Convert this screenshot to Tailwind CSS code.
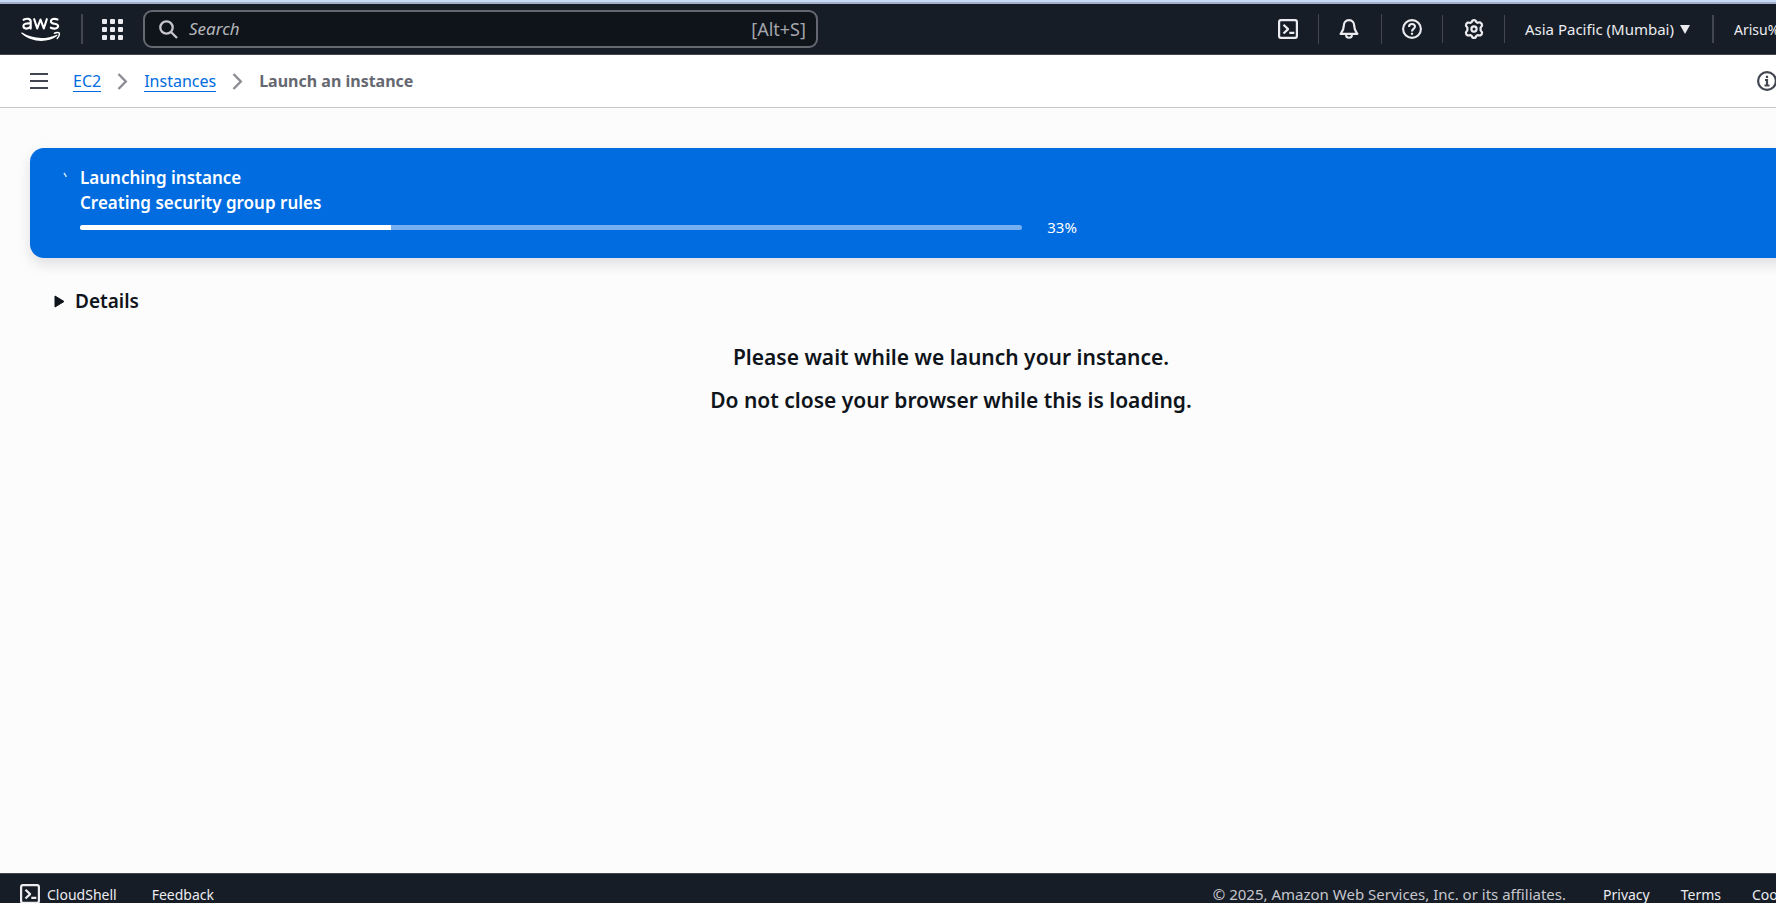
<!DOCTYPE html>
<html lang="en">
<head>
<meta charset="utf-8">
<title>Launch an instance | EC2</title>
<script src="https://cdn.jsdelivr.net/npm/@tailwindcss/browser@4"></script>
</head>
<body class="flex h-screen flex-col overflow-hidden bg-[#fcfcfd] font-['Noto_Sans','Open_Sans',sans-serif] text-[#0f141a]">
<div class="h-[4px] shrink-0 border-b-2 border-[#a3aec9] bg-[#c9dbf7]"></div>

<header class="flex h-[51px] shrink-0 items-center border-b border-[#424650] bg-[#161d26] text-[#ebebf0]">
  <a href="#" aria-label="AWS home" class="ml-[20px] block">
    <svg width="42" height="30" viewBox="0 0 42 30" fill="none" stroke="#fff" stroke-linecap="round" stroke-linejoin="round">
      <path stroke-width="2.1" d="M3.6 5.8C6.7 4.2 10.7 4.3 10.7 7.500V14.600M10.700 9.500C6.300 9.100 3.400 9.600 3.400 12.100c0 3.400 5.300 3.200 7.300.3M14.200 5.200l3 9.300 3.300-9 3.300 9 3-9.300M37.500 5.500c-3-1.200-6.600-.6-6.600 1.900 0 3.200 7.200 1.700 7.200 4.700 0 2.800-4.400 3.100-7.300 1.600"/>
      <path fill="#fff" stroke="none" d="M2.200 18.600C12.500 25.200 26 25.600 36.300 20.900c.9-.3 1.500.5.700 1.100C27.500 29.300 11 28.400 1.500 19.500c-.6-.6 0-1.300.7-.9Z"/>
      <path stroke-width="1.500" d="M34.400 19.200c2.300-1.100 4.900-.9 5 .1.100 1.500-.8 4-2.200 5.200"/>
    </svg>
  </a>
  <div class="ml-[19px] h-[30px] w-[2px] bg-[#424650]"></div>
  <button type="button" aria-label="Services" class="ml-[19px] grid grid-cols-3 gap-[3px]">
    <span class="size-[5px] rounded-[1px] bg-[#ebebf0]"></span><span class="size-[5px] rounded-[1px] bg-[#ebebf0]"></span><span class="size-[5px] rounded-[1px] bg-[#ebebf0]"></span>
    <span class="size-[5px] rounded-[1px] bg-[#ebebf0]"></span><span class="size-[5px] rounded-[1px] bg-[#ebebf0]"></span><span class="size-[5px] rounded-[1px] bg-[#ebebf0]"></span>
    <span class="size-[5px] rounded-[1px] bg-[#ebebf0]"></span><span class="size-[5px] rounded-[1px] bg-[#ebebf0]"></span><span class="size-[5px] rounded-[1px] bg-[#ebebf0]"></span>
  </button>
  <div class="ml-[20px] flex h-[38px] w-[38%] items-center rounded-[9px] border-2 border-[#656871] bg-[#0f141a] pr-[10px] pl-[14px]">
    <svg width="19" height="19" viewBox="0 0 19 19" fill="none" stroke="#c6c6cd" stroke-width="2.300"><circle cx="7.500" cy="7.500" r="6.200"/><path d="M12 12l6 6"/></svg>
    <input type="text" aria-label="Search" placeholder="Search" class="ml-[11px] min-w-0 flex-1 bg-transparent text-[17px] italic outline-none placeholder:text-[#b4b4bb]">
    <span class="text-[18px] text-[#a4a4ad]">[Alt+S]</span>
  </div>
  <nav aria-label="Account" class="ml-auto flex items-center">
    <button type="button" aria-label="CloudShell">
      <svg width="20" height="20" viewBox="0 0 20 20" fill="none" stroke="#ebebf0" stroke-width="2.200" stroke-linejoin="round"><rect x="1.100" y="1.100" width="17.800" height="17.800" rx="1.800"/><path d="M5.500 5.700l4.600 4.400-4.600 4.400M11.300 13.800h5"/></svg>
    </button>
    <div class="ml-[20px] h-[30px] w-px bg-[#424650]"></div>
    <button type="button" aria-label="Notifications" class="ml-[20px]">
      <svg width="20" height="20" viewBox="0 0 20 20" fill="none" stroke="#ebebf0" stroke-width="2.200" stroke-linejoin="round"><path d="M10 1.200c-3.500 0-5.200 2.600-5.200 5.600 0 4-1.100 5.200-3.200 8h16.800c-2.100-2.800-3.200-4-3.200-8 0-3-1.700-5.600-5.200-5.600Z"/><path d="M7 16.200c.4 3.400 5.600 3.400 6 0"/></svg>
    </button>
    <div class="ml-[22px] h-[30px] w-px bg-[#424650]"></div>
    <button type="button" aria-label="Help" class="ml-[20px]">
      <svg width="20" height="20" viewBox="0 0 20 20" fill="none" stroke="#ebebf0" stroke-width="2.100"><circle cx="10" cy="10" r="8.900"/><path d="M7 8c0-4 6-3.900 6-.4 0 2.300-3 2.300-3 4.800M10 13.700v2"/></svg>
    </button>
    <div class="ml-[20px] h-[28px] w-px bg-[#424650]"></div>
    <button type="button" aria-label="Settings" class="ml-[21px]">
      <svg width="20" height="20" viewBox="0 0 20 20" fill="none" stroke="#ebebf0" stroke-width="2.200" stroke-linejoin="round"><path d="M7.700 3.100Q8.200 1.100 10 1.100t2.300 2l1.200.7q2-.6 2.800-.3c1.200.7 1.900 2 1.800 3.200l-1.500 2v2.600l1.500 2c.1 1.200-.6 2.500-1.800 3.200l-2.800-.3-1.200.7Q11.800 18.900 10 18.900t-2.300-2l-1.200-.7-2.800.3c-1.200-.7-1.900-2-1.800-3.200l1.500-2V8.700l-1.500-2c-.1-1.200.6-2.500 1.800-3.200l2.800.3Z"/><circle cx="10" cy="10" r="2.600"/></svg>
    </button>
    <div class="ml-[20px] h-[28px] w-px bg-[#424650]"></div>
    <button type="button" class="ml-[20px] flex items-center gap-[6px] text-[15px] whitespace-nowrap">
      Asia Pacific (Mumbai)
      <svg width="10" height="9" viewBox="0 0 10 9" fill="#ebebf0"><path d="M0 0h10L5 9Z"/></svg>
    </button>
    <div class="ml-[22px] h-[28px] w-[2px] bg-[#424650]"></div>
    <button type="button" class="ml-[20px] w-[42px] overflow-hidden text-left text-[14px] whitespace-nowrap">Arisu%</button>
  </nav>
</header>

<div class="flex h-[53px] shrink-0 items-center overflow-hidden border-b border-[#c6c6cd] bg-white pl-[30px]">
  <button type="button" aria-label="Open navigation" class="flex flex-col gap-[5px]">
    <span class="h-[2px] w-[18px] bg-[#424650]"></span><span class="h-[2px] w-[18px] bg-[#424650]"></span><span class="h-[2px] w-[18px] bg-[#424650]"></span>
  </button>
  <nav aria-label="Breadcrumb" class="ml-[25px] flex items-center gap-[16px] text-[16px] whitespace-nowrap">
    <a href="#" class="border-b border-[#006ce0] leading-[20px] text-[#006ce0]">EC2</a>
    <svg width="11" height="17" viewBox="0 0 11 17" fill="none" stroke="#8c8c94" stroke-width="2.400"><path d="M1.500 1l7.300 7.500L1.500 16"/></svg>
    <a href="#" class="border-b border-[#006ce0] leading-[20px] text-[#006ce0]">Instances</a>
    <svg width="11" height="17" viewBox="0 0 11 17" fill="none" stroke="#8c8c94" stroke-width="2.400"><path d="M1.500 1l7.300 7.500L1.500 16"/></svg>
    <span class="font-bold text-[#656871]">Launch an instance</span>
  </nav>
  <button type="button" aria-label="Info" class="ml-auto w-[19px] overflow-hidden">
    <svg width="20" height="20" viewBox="0 0 20 20" fill="none" stroke="#424650" stroke-width="2.200"><circle cx="10" cy="10" r="8.900"/><path d="M10 4.700v2.200M8 9h2v6M7.500 14.500h5"/></svg>
  </button>
</div>

<main class="min-h-0 flex-1 overflow-hidden pt-[40px] pl-[30px]">
  <section class="-mr-[30px] rounded-[14px] bg-[#006ce0] pt-[17px] pr-[30px] pb-[18px] pl-[50px] text-white shadow-[0_6px_14px_rgba(0,7,22,0.12)]">
    <div class="relative text-[17px] leading-[25px] font-semibold">
      <svg class="absolute top-[7px] -left-[17px]" width="5" height="6" viewBox="0 0 5 6" fill="none" stroke="#fff" stroke-opacity=".8" stroke-width="1.500"><path d="M1 1l2.500 3.800"/></svg>
      <p>Launching instance</p>
      <p>Creating security group rules</p>
    </div>
    <div class="flex h-[25px] items-center">
      <div role="progressbar" aria-label="Launch progress" aria-valuenow="33" aria-valuemin="0" aria-valuemax="100" class="h-[5px] w-5/9 overflow-hidden rounded-[3px] bg-[#75aff0]">
        <div class="h-full bg-white" style="width:33%"></div>
      </div>
      <span class="ml-[25px] text-[15px]">33%</span>
    </div>
  </section>
  <button type="button" aria-expanded="false" class="mt-[30px] ml-[24px] flex items-center gap-[10px] text-[19px] leading-[26px] font-semibold">
    <svg width="11" height="13" viewBox="0 0 11 13" fill="#0f141a" stroke="#0f141a" stroke-linejoin="round"><path d="M1 1v11l9-5.500Z"/></svg>
    Details
  </button>
  <div class="mt-[22px] pl-[96px] text-center text-[21px] leading-[43px] font-semibold">
    <h1>Please wait while we launch your instance.</h1>
    <h2>Do not close your browser while this is loading.</h2>
  </div>
</main>

<footer class="h-[30px] shrink-0 overflow-hidden border-t border-[#424650] bg-[#161d26] text-[14px] text-[#ebebf0]">
  <div class="flex h-[40px] items-center whitespace-nowrap">
    <button type="button" class="ml-[20px] flex items-center gap-[7px]">
      <svg width="20" height="20" viewBox="0 0 20 20" fill="none" stroke="#ebebf0" stroke-width="2.200" stroke-linejoin="round"><rect x="1.100" y="1.100" width="17.800" height="17.800" rx="1.800"/><path d="M5.500 5.700l4.600 4.400-4.600 4.400M11.300 13.800h5"/></svg>
      CloudShell
    </button>
    <a href="#" class="ml-[35px]">Feedback</a>
    <span class="ml-auto text-[15px] text-[#c6c6cd]">© 2025, Amazon Web Services, Inc. or its affiliates.</span>
    <a href="#" class="ml-[37px]">Privacy</a>
    <a href="#" class="ml-[31px]">Terms</a>
    <a href="#" class="ml-[31px] w-[24px] overflow-hidden">Coo</a>
  </div>
</footer>
</body>
</html>
